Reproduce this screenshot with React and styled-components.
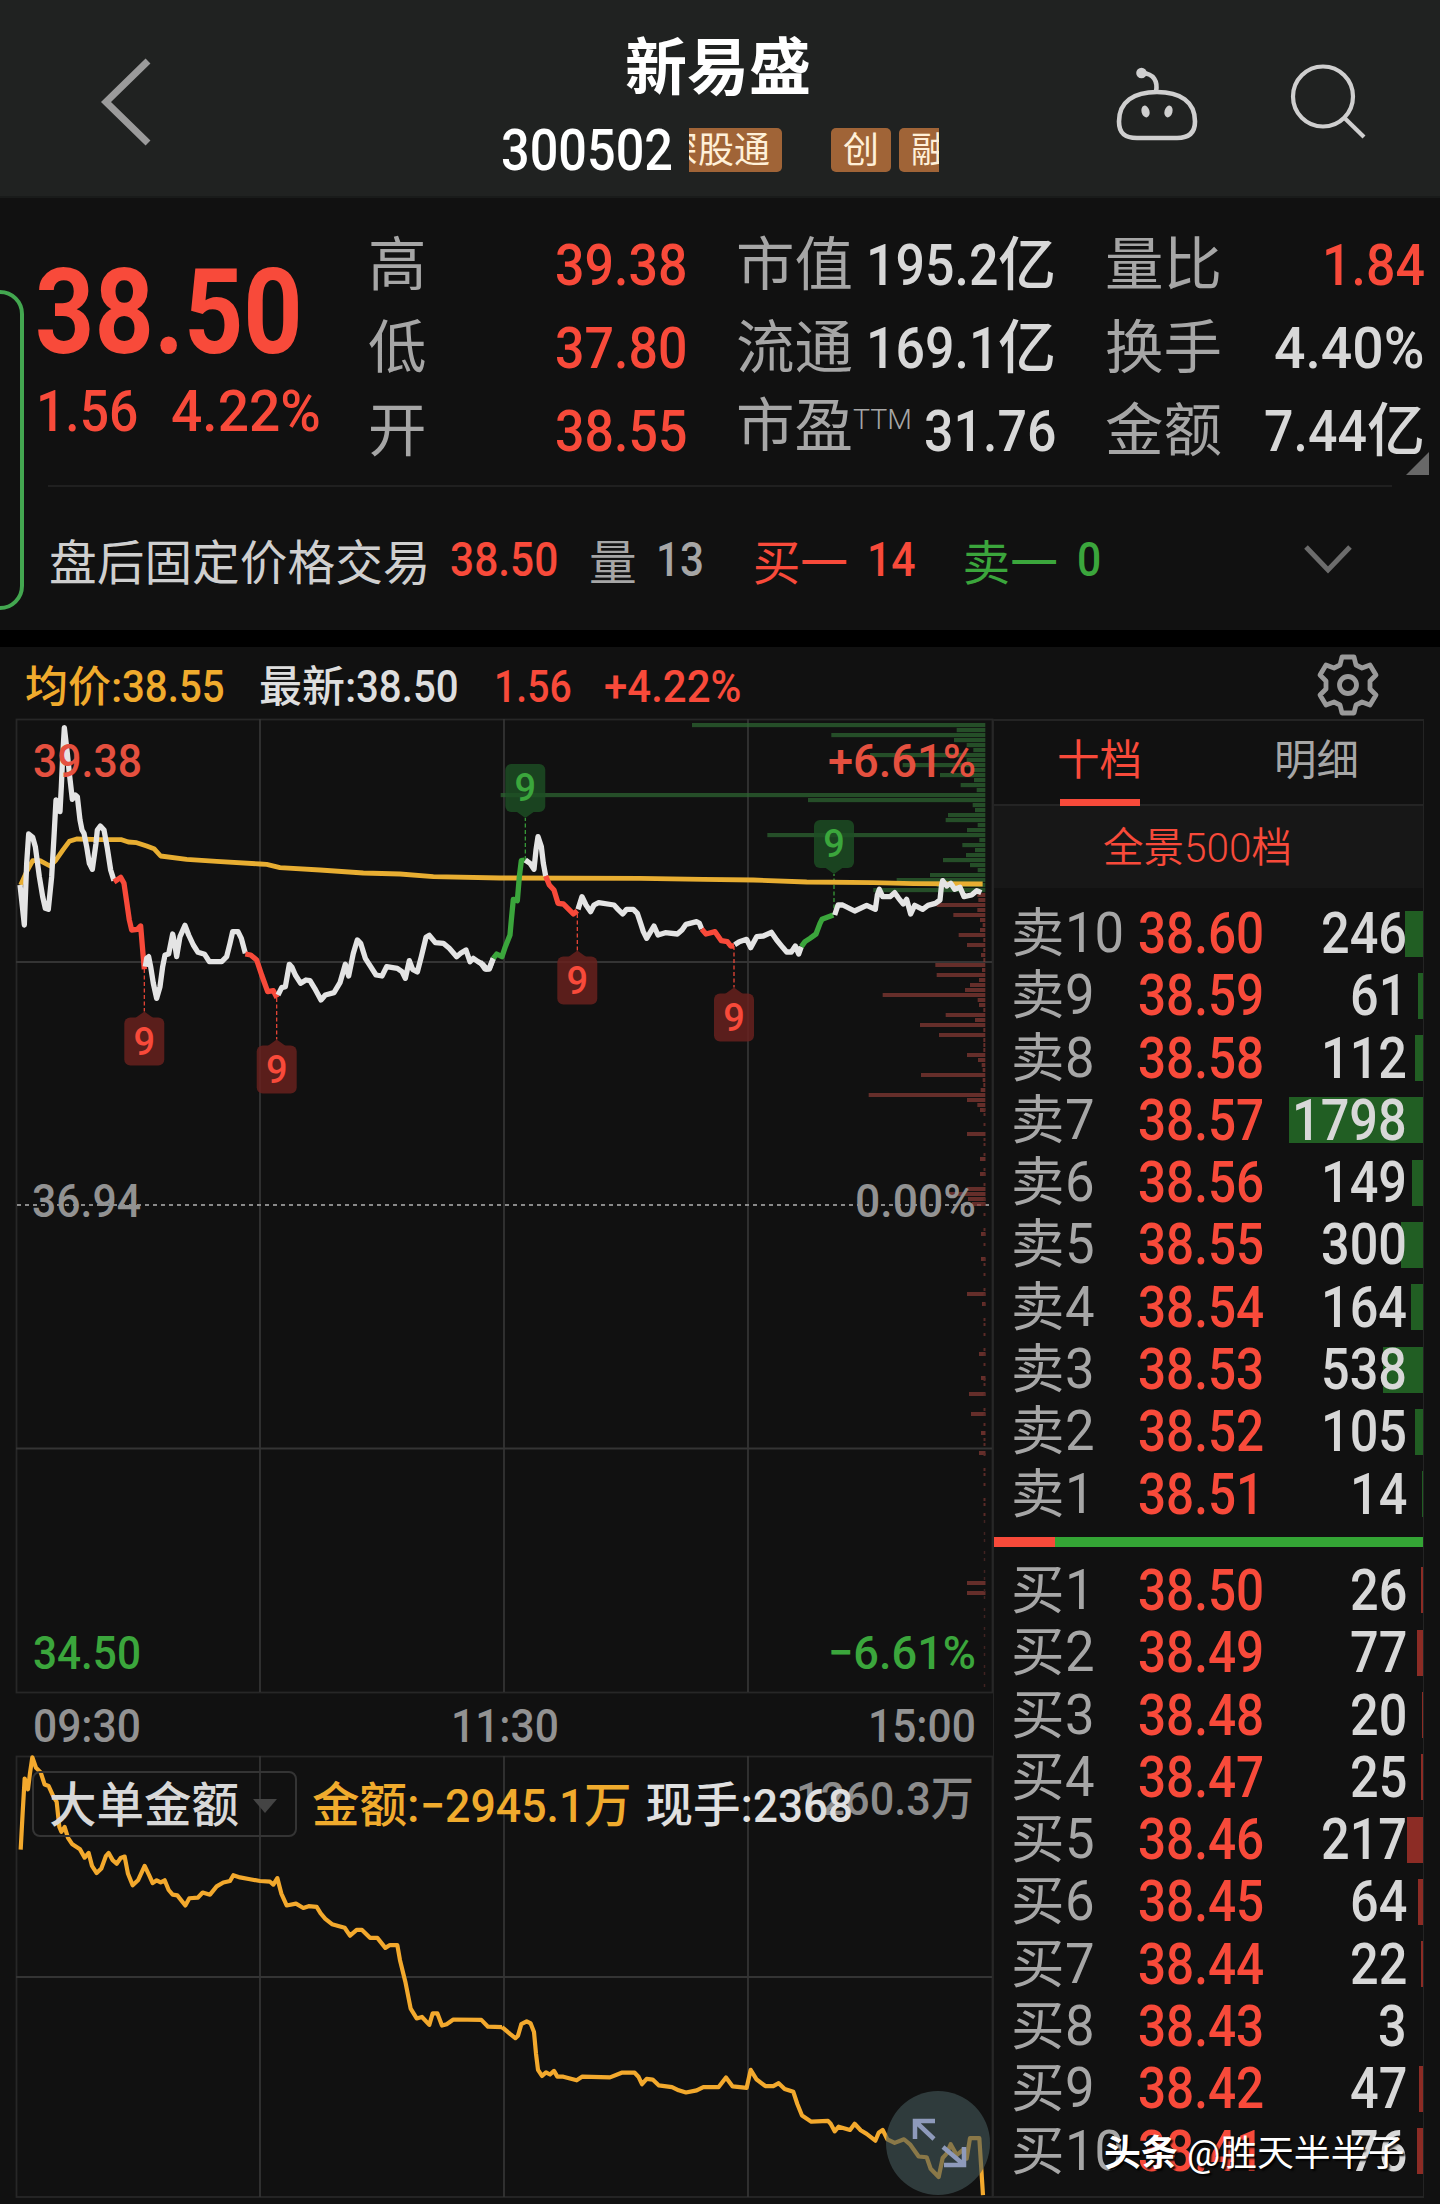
import styled, { createGlobalStyle } from "styled-components"

const RED = "#f84a3a"
const GREEN = "#3ba63c"
const LIGHT = "#d8d8d8"
const GRAY = "#a6a6a6"
const GOLD = "#f0ab2d"

const GlobalStyle = createGlobalStyle`
  * {
    box-sizing: border-box;
  }
  body {
    margin: 0;
    background-color: #111111;
    font-family: Roboto, "Noto Sans CJK SC", sans-serif;
  }
`

const Page = styled.div`
  width: 1440px;
  height: 2204px;
  overflow: hidden;
  position: relative;
  background-color: #111111;
  color: ${LIGHT};
`

// condensed figures: squeeze the glyphs and give the saved width back
const Figure = styled.span`
  display: inline-block;
  font-family: Roboto, sans-serif;
  font-size: ${(p) => p.$size}px;
  font-weight: ${(p) => p.$weight};
  color: ${(p) => p.$color || "inherit"};
  white-space: nowrap;
  transform: scaleX(${(p) => p.$k});
  transform-origin: left;
  margin-right: ${(p) => (p.$k - 1) * p.$chars}ch;
`
const CHAR_WIDTHS = { ".": 0.49, ":": 0.46, "%": 1.3, "−": 1 }

const Num = ({ size = 57, weight = 500, k = 0.9, color, children }) => {
  const text = String(children)
  const chars = [...text].reduce((sum, c) => sum + (CHAR_WIDTHS[c] || 1), 0)
  return <Figure $size={size} $weight={weight} $k={k} $color={color} $chars={chars}>{text}</Figure>
}

/* header */
const Header = styled.header`
  height: 198px;
  display: flex;
  align-items: flex-start;
  background-color: #202221;
  border-bottom: 2px solid #191b1a;
`
const BackIcon = styled.svg`
  width: 60px;
  height: 100px;
  margin: 52px 0 0 96px;
`
const Heading = styled.div`
  width: 438px;
  margin-left: 345px;
`
const Title = styled.h1`
  margin: 33px 0 0;
  padding-left: 124px;
  font-size: 62px;
  line-height: 72px;
  font-weight: 600;
  color: #ffffff;
`
const CodeLine = styled.div`
  height: 44px;
  margin-top: 23px;
  display: flex;
  align-items: center;
  justify-content: space-between;
  color: #ffffff;
`
const Tags = styled.div`
  flex: none;
  width: 250px;
  height: 44px;
  overflow: hidden;
  display: flex;
`
const Tag = styled.span`
  flex: none;
  height: 44px;
  padding: 0 12px;
  border-radius: 5px;
  margin-left: ${(p) => p.$gap || 0}px;
  font-size: 36px;
  line-height: 46px;
  color: #fff0d8;
  background-color: #a06437;
`
const RobotIcon = styled.svg`
  width: 90px;
  height: 84px;
  margin: 62px 0 0 172px;
`
const SearchIcon = styled.svg`
  width: 84px;
  height: 84px;
  margin: 60px 0 0 84px;
`

/* quote */
const Quote = styled.section`
  height: 432px;
  position: relative;
`
const SideTab = styled.div`
  position: absolute;
  left: -30px;
  top: 92px;
  width: 54px;
  height: 320px;
  border: 4px solid #43a750;
  border-radius: 24px;
`
const QuoteTop = styled.div`
  height: 289px;
  margin: 0 48px;
  display: flex;
  border-bottom: 2px solid #202020;
`
const Main = styled.div`
  flex: none;
  width: 333px;
  margin-left: -13px;
  padding-top: 56px;
  color: ${RED};
`
const Price = styled.div`
  height: 117px;
  line-height: 118px;
`
const Change = styled.div`
  height: 80px;
  line-height: 80px;
  padding-left: 1px;
  display: flex;
  gap: 33px;
`
const Stats = styled.div`
  display: grid;
  flex: none;
  grid-template-columns: 319px 320px 320px;
  grid-template-rows: repeat(3, 83px);
  column-gap: 49px;
  padding-top: 26px;
`
const Stat = styled.div`
  display: flex;
  justify-content: space-between;
  align-items: center;
  line-height: 83px;
  font-size: 58px;
  font-weight: 500;
  color: ${(p) => p.$color || LIGHT};
  white-space: nowrap;
`
const StatLabel = styled.span`
  color: ${GRAY};
  font-size: 58.5px;
  font-weight: 400;
`
const Sup = styled.span`
  font-size: 28.5px;
  font-weight: 300;
  position: relative;
  top: -17px;
`
const Corner = styled.svg`
  position: absolute;
  left: 1405px;
  top: 253px;
  width: 24px;
  height: 24px;
`
const AfterHours = styled.div`
  height: 143px;
  padding: 1px 87px 0 49px;
  display: flex;
  align-items: center;
  font-size: 47.7px;
  color: #cfcfcf;
`
const Field = styled.span`
  flex: none;
  display: flex;
  align-items: center;
  gap: 19px;
  margin-right: ${(p) => p.$after}px;
  color: ${(p) => p.$color || "inherit"};
`
const DownIcon = styled.svg`
  width: 50px;
  height: 32px;
  margin-left: auto;
`

/* info line */
const InfoLine = styled.div`
  height: 89px;
  border-top: 17px solid #000000;
  padding: 0 60px 0 25px;
  display: flex;
  align-items: flex-start;
  font-size: 43px;
  font-weight: 500;
`
const Info = styled.span`
  color: ${(p) => p.$color};
  line-height: 80px;
  margin-right: ${(p) => p.$after || 0}px;
  white-space: nowrap;
`
const GearIcon = styled.svg`
  width: 64px;
  height: 64px;
  margin: 6px 0 0 auto;
`

/* body */
const Body = styled.main`
  display: grid;
  grid-template-columns: 977px 431px;
  margin-left: 16px;
`
const Charts = styled.div`
  display: flex;
  flex-direction: column;
`
const ChartSvg = styled.svg`
  display: block;
  width: 977px;
  height: ${(p) => p.$h}px;
  overflow: visible;
`
const Times = styled.div`
  height: 63px;
  padding: 1px 17px 0;
  display: flex;
  align-items: center;
  justify-content: space-between;
  color: #929292;
`
const Lower = styled.div`
  position: relative;
`
const LowerHead = styled.div`
  position: absolute;
  left: 16px;
  top: 15px;
  height: 66px;
  display: flex;
  align-items: center;
  font-size: 47.5px;
  line-height: 62px;
  font-weight: 500;
  white-space: nowrap;
`
const LowerInfo = styled.span`
  color: ${(p) => p.$color};
  margin: 3px ${(p) => p.$after || 0}px 0 0;
`
const Picker = styled.div`
  width: 265px;
  height: 66px;
  padding: 3px 17px 0 15px;
  border: 2px solid #343434;
  border-radius: 8px;
  display: flex;
  align-items: center;
  justify-content: space-between;
  margin-right: 15px;
`
const Expand = styled.svg`
  position: absolute;
  left: 870px;
  top: 335px;
  width: 104px;
  height: 104px;
`

/* order book */
const Book = styled.aside`
  height: 1479px;
  border: solid #242424;
  border-width: 2px 1px;
`
const Tabs = styled.div`
  height: 85px;
  display: flex;
  justify-content: space-between;
  padding: 0 64px 0 63px;
  border-bottom: 2px solid #242424;
`
const Tab = styled.div`
  height: 85px;
  font-size: 42.5px;
  line-height: 80px;
  font-weight: 400;
  color: ${(p) => (p.$active ? RED : GRAY)};
  background: linear-gradient(${RED}, ${RED}) bottom / ${(p) => (p.$active ? "80px" : 0)} 7px no-repeat;
`
const Depth = styled.div`
  height: 82px;
  padding-left: 109px;
  font-size: 40.5px;
  line-height: 85px;
  font-weight: 350;
  color: ${RED};
  background-color: #171717;
`
const Side = styled.div`
  padding-top: ${(p) => p.$top}px;
`
const Row = styled.div`
  height: 62.3px;
  display: grid;
  grid-template-columns: 127px 130px 1fr;
  align-items: center;
  padding-left: 17px;
`
const RowLabel = styled.span`
  font-size: 53.5px;
  line-height: 62px;
  font-weight: 400;
  color: ${GRAY};
  white-space: nowrap;
`
const Volume = styled.div`
  height: 46px;
  padding-right: 16px;
  display: flex;
  justify-content: flex-end;
  align-items: center;
  background: linear-gradient(${(p) => p.$bar}, ${(p) => p.$bar}) right / ${(p) => p.$w}px 100% no-repeat;
`
const Ratio = styled.div`
  height: 10px;
  margin-top: 14px;
  background: linear-gradient(90deg, ${RED} 61px, #34a535 61px);
`
const Watermark = styled.div`
  position: absolute;
  left: 1104px;
  top: 2128px;
  font-size: 36.9px;
  line-height: 52px;
  color: #ffffff;
  text-shadow: 2px 2px 2px #000000;
  white-space: nowrap;
`

const stats = [
  ["高", "39.38", "", RED], ["市值", "195.2", "亿"], ["量比", "1.84", "", RED],
  ["低", "37.80", "", RED], ["流通", "169.1", "亿"], ["换手", "4.40%", ""],
  ["开", "38.55", "", RED], ["市盈", "31.76", ""], ["金额", "7.44", "亿"],
]
const sells = [246, 61, 112, 1798, 149, 300, 164, 538, 105, 14]
const buys = [26, 77, 20, 25, 217, 64, 22, 3, 47, 76]

// line data is in thirds of a pixel; the afternoon part starts at 1440
const morning = [
  ["#e4e4e4", "60,765 66,820 73,885 80,700 86,612 98,622 106,650 118,740 128,800 136,835 145,838 155,740 162,620 168,510 174,515 180,545 184,470 188,380 193,293 202,370 208,430 217,508 226,495 232,500 240,570 246,600 252,610 260,650 268,700 277,718 288,640 292,600 301,588 312,600 322,655 332,720 342,752"],
  [RED, "342,756 362,742 372,760 380,815 388,870 395,900 412,898 422,888 428,960 433,1018"],
  ["#e4e4e4", "436,1010 440,985 446,980 452,1010 460,1060 470,1105 480,1070 488,1010 495,975 506,972 518,912 524,940 530,980 540,920 555,886 566,915 580,945 594,967 614,973 628,995 665,995 680,980 690,940 698,905 714,905 724,925 736,970"],
  [RED, "736,972 752,975 770,990 785,1035 803,1085 820,1082 831,1103"],
  ["#e4e4e4", "834,1095 845,1073 856,1070 868,1003 876,1012 886,1035 902,1060 918,1050 930,1052 944,1075 963,1110 976,1095 1002,1088 1020,1058 1036,1003 1046,1038 1060,970 1072,930 1082,940 1096,985 1112,1010 1128,1035 1146,1038 1160,1010 1192,1015 1206,1025 1216,1045 1228,992 1238,1018 1252,1026 1264,980 1278,922 1288,916 1306,938 1330,940 1348,955 1370,980 1382,970 1398,960 1410,995 1420,985 1434,995 1448,1003 1460,1017 1468,1015 1480,985"],
]
const afternoon = [
  [GREEN, "40,985 50,972 66,980 76,950 90,915 94,870 100,808 112,812 118,740 124,692 134,690"],
  ["#e4e4e4", "136,690 150,700 162,718 168,660 174,620 184,650 190,700 197,738"],
  [RED, "197,738 208,765 222,780 234,820 250,822 268,840 280,852 292,842"],
  ["#e4e4e4", "294,838 306,800 318,825 332,845 342,825 356,818 402,825 414,838 428,852 440,838 460,838 472,850 482,880 490,905 500,925 512,905 522,888 534,915 556,908 592,912 606,900 618,883 650,875 658,880 665,897"],
  [RED, "665,897 678,912 705,905 724,932 742,935 752,948 762,948"],
  ["#e4e4e4", "764,944 778,935 800,928 812,953 830,920 850,918 874,907 890,930 908,952 920,966 934,966 946,948 956,972 964,950"],
  [GREEN, "964,950 975,935 990,925 1008,912 1020,880 1026,868 1060,855"],
  ["#e4e4e4", "1064,855 1074,825 1088,825 1124,843 1160,826 1186,838 1192,795 1198,778 1208,800 1230,800 1244,788 1256,805 1270,822 1280,808 1292,852 1304,826 1328,838 1344,826 1366,820 1380,810 1384,770 1388,752 1400,768 1412,760 1424,778 1440,772 1452,800 1475,795 1490,782 1504,788"],
]
const average = "62,765 80,725 98,692 120,692 150,708 168,690 190,658 208,634 230,627 300,629 365,629 385,636 410,638 440,648 462,656 482,678 560,688 650,694 780,702 800,703 840,713 960,720 1090,729 1200,732 1300,740 1500,744 1920,745 2110,748 2260,750 2420,756 2620,758 2740,761 2948,762"
const flowA = "62,583 68,480 74,385 84,415 90,370 97,326 108,355 122,368 134,402 146,406 160,435 170,450 178,520 184,533 194,520 204,550 216,567 240,582 254,605 266,592 276,628 290,648 304,635 318,600 326,592 338,612 350,622 362,606 374,602 384,650 398,682 414,668 434,628 448,655 458,676 470,668 482,674 494,668 506,695 518,708 532,710 556,738 568,718 594,716 608,702 630,708 650,685 670,674 690,670 700,654 720,660 750,665 780,670 810,672 820,680 832,662 844,705 860,738 888,733 910,745 926,740 950,742 962,760 976,775 996,790 1034,800 1050,822 1070,806 1086,806 1110,828 1132,828 1156,856 1170,848 1192,848 1200,890 1216,950 1232,1025 1250,1052 1266,1048 1288,1070 1298,1038 1312,1038 1326,1072 1340,1068 1360,1055 1444,1056 1464,1075 1506,1076"
const flowB = "66,1076 90,1095 106,1107 114,1100 124,1068 140,1060 152,1066 162,1090 168,1150 174,1195 186,1212 198,1202 210,1208 222,1198 232,1214 250,1214 290,1224 306,1214 390,1216 425,1203 464,1203 476,1215 486,1235 500,1220 518,1222 536,1238 576,1243 596,1252 618,1258 650,1252 670,1243 716,1243 738,1216 758,1241 800,1245 812,1195 830,1222 856,1240 880,1240 896,1232 914,1248 940,1256 952,1290 966,1322 994,1339 1044,1337 1052,1345 1064,1366 1076,1353 1110,1362 1124,1345 1142,1363 1160,1373 1186,1392 1196,1370 1208,1362 1222,1388 1244,1398 1272,1388 1290,1402 1316,1436 1340,1438 1352,1470 1376,1493 1388,1440 1400,1428 1412,1402 1430,1432 1448,1418 1460,1442 1470,1385 1498,1385 1509,1543"

// left end of every price level bar, one level each 5px
const greenBars = [636, 1430, 1054, 1422, 1460, 1480, 1170, 1460, 1268, 1480, 1380, 1482, 1442, 1490, 62, 984, 1478, 1485, 1404, 1397, 1493, 1461, 862, 1498, 1447, 1485, 1458, 1389, 1470, 1493, 1350, 1250, 1370, 1180]
const redBars = [1492, 1495, 1370, 1492, 1420, 1500, 1508, 1500, 1436, 1510, 1461, 1510, 1503, 1510, 1366, 1506, 1370, 1497, 1470, 1455, 1208, 1493, 1497, 1510, 1397, 1485, 1320, 1510, 1377, 1510, 1510, 1510, 1461, 1494, 1505, 1508, 1323, 1508, 1510, 1502, 1166, 1461, 1492, 1500]
const lowBars = [
  [1134, 967], [1159, 980], [1174, 980], [1189, 967], [1194, 946], [1199, 968], [1204, 972], [1234, 981],
  [1259, 981], [1294, 967], [1304, 982], [1354, 979], [1378, 981], [1394, 969], [1414, 971], [1433, 981],
  [1453, 979], [1583, 967], [1593, 967],
]

const signals = [
  { x: 144.3, from: 969, y: 1017.5, up: true },
  { x: 276.7, from: 998, y: 1045.5, up: true },
  { x: 577.3, from: 914, y: 956.5, up: true },
  { x: 734, from: 946, y: 993.5, up: true },
  { x: 525.3, from: 860, y: 764, up: false },
  { x: 834, from: 915, y: 820, up: false },
]

const Signal = ({ x, y, from, up }) => {
  const color = up ? RED : GREEN
  const tip = up
    ? `M${x - 9} ${y + 0.5}L${x} ${y - 6}L${x + 9} ${y + 0.5}Z`
    : `M${x - 9} ${y + 47.5}L${x} ${y + 54}L${x + 9} ${y + 47.5}Z`
  return (
    <g>
      <path d={`M${x} ${from}V${up ? y - 6 : y + 54}`} stroke={color} strokeWidth="1.2" strokeDasharray="4 2.5" />
      <g fill={up ? "#6a211e" : "#1d4f24"} opacity=".82">
        <rect x={x - 20} y={y} width="40" height="48" rx="6" />
        <path d={tip} />
      </g>
      <text x={x} y={up ? y + 37 : y + 36.5} textAnchor="middle" fontSize="38" fontWeight="500" fill={color}>9</text>
    </g>
  )
}

const Line = ({ points, color, width = 5.3 }) => (
  <polyline points={points} fill="none" stroke={color} strokeWidth={width} strokeLinejoin="round" strokeLinecap="butt" vectorEffect="non-scaling-stroke" />
)

const AxisText = ({ x, y, w, color, children }) => (
  <text x={x} y={y} fontSize="47" fontWeight="500" fill={color} textLength={w} lengthAdjust="spacingAndGlyphs">{children}</text>
)

const PriceChart = () => (
  <ChartSvg $h={974} viewBox="16 719 977 974">
    <g stroke="#343434" strokeWidth="1.8" fill="none">
      <rect x="16.5" y="719.5" width="976" height="973" stroke="#272727" />
      <path d="M260 719V1692M504 719V1692M748 719V1692M16 962H992M16 1448.5H992" />
    </g>
    <path d="M17 1205H992" stroke="#8a8a8a" strokeWidth="1.8" strokeDasharray="4 4" />
    <g transform="translate(480 630) scale(.33333)">
      {greenBars.map((x, i) => (
        <rect key={i} x={x} y={279 + i * 15} width={1516 - x} height="12.5" fill="#2c6330" fillOpacity=".75" />
      ))}
      {redBars.map((x, i) => (
        <rect key={i} x={x} y={789 + i * 15} width={1516 - x} height="12" fill="#863a34" fillOpacity=".72" />
      ))}
    </g>
    {lowBars.map(([y, x]) => (
      <rect key={y} x={x} y={y - 2} width={985.5 - x} height="4" fill="#863a34" fillOpacity=".72" />
    ))}
    <path d="M984.5 1108V1520" stroke="#5a2a27" strokeWidth="2" strokeDasharray="3 2 3 7 3 12" />
    <path d="M984.5 1520V1690" stroke="#402321" strokeWidth="1.5" strokeDasharray="3 9 3 4" />
    {signals.map((s) => <Signal key={s.x} {...s} />)}
    <g transform="translate(0 630) scale(.33333)">
      <Line points={average} color="#e8ae32" width={4.8} />
      {morning.map(([c, pts]) => <Line key={pts} points={pts} color={c} />)}
    </g>
    <g transform="translate(480 630) scale(.33333)">
      <Line points="0,995 15,1017 28,1017 40,985" color="#e4e4e4" />
      {afternoon.map(([c, pts]) => <Line key={pts} points={pts} color={c} />)}
    </g>
    <AxisText x={33} y={777} w={109} color="#e5503f">39.38</AxisText>
    <AxisText x={828} y={777} w={148} color="#e5503f">+6.61%</AxisText>
    <AxisText x={32} y={1217} w={109} color="#929292">36.94</AxisText>
    <AxisText x={855} y={1217} w={121} color="#929292">0.00%</AxisText>
    <AxisText x={33} y={1669} w={108} color={GREEN}>34.50</AxisText>
    <AxisText x={828} y={1669} w={148} color={GREEN}>−6.61%</AxisText>
  </ChartSvg>
)

const FlowChart = () => (
  <ChartSvg $h={442} viewBox="16 1756 977 442">
    <g stroke="#343434" strokeWidth="1.8" fill="none">
      <rect x="16.5" y="1756.5" width="976" height="440.5" stroke="#272727" />
      <path d="M260 1756V2197M504 1756V2197M748 1756V2197M16 1977H992" />
    </g>
    <g transform="translate(0 1640) scale(.33333 .3597)">
      <Line points={flowA} color="#f3a92d" width={4.2} />
    </g>
    <g transform="translate(480 1640) scale(.33333 .3597)">
      <Line points={flowB} color="#f3a92d" width={4.2} />
    </g>
    <AxisText x={796} y={1815} w={178} color="#8c8c8c">1260.3万</AxisText>
  </ChartSvg>
)

const BookRow = ({ label, index, price, volume, bar }) => (
  <Row>
    <RowLabel>{label}<Num size={56} weight={400} k={0.94}>{index}</Num></RowLabel>
    <Num color={RED} k={0.868}>{price}</Num>
    <Volume $bar={bar} $w={Math.round(volume * 0.0745)}><Num k={0.885}>{volume}</Num></Volume>
  </Row>
)

const App = () => {
  return (
    <Page>
      <GlobalStyle />
      <Header>
        <BackIcon viewBox="96 52 60 100">
          <path d="M148 61L106 102L148 143" fill="none" stroke="#9b9b9b" strokeWidth="7" />
        </BackIcon>
        <Heading>
          <Title>新易盛</Title>
          <CodeLine>
            <Num k={0.885}>300502</Num>
            <Tags>
              <Tag $gap={-39}>深股通</Tag>
              <Tag $gap={49}>创</Tag>
              <Tag $gap={8}>融</Tag>
            </Tags>
          </CodeLine>
        </Heading>
        <RobotIcon viewBox="1111 61.500 90 84" fill="none" stroke="#cfcfcf" strokeWidth="4.6">
          <path d="M1156 91C1158 81 1154 73 1142 72.5" />
          <circle cx="1141.500" cy="72.500" r="3" fill="#cfcfcf" />
          <path d="M1157 91.500C1180 91.500 1195 101 1195 121C1195 133 1188 137.500 1177 137.500H1137C1125 137.500 1119 133 1119 121C1119 101 1134 91.500 1157 91.500Z" />
          <g fill="#cfcfcf" stroke="none">
            <ellipse cx="1145.500" cy="111" rx="4" ry="6" transform="rotate(-15 1145.500 111)" />
            <ellipse cx="1168.500" cy="111" rx="4" ry="6" transform="rotate(15 1168.500 111)" />
          </g>
        </RobotIcon>
        <SearchIcon viewBox="1285 59.500 84 84" fill="none" stroke="#cfcfcf" strokeWidth="4.2">
          <circle cx="1323" cy="96" r="30" />
          <path d="M1344 117L1364 136.500" />
        </SearchIcon>
      </Header>

      <Quote>
        <SideTab />
        <QuoteTop>
          <Main>
            <Price><Num size={118} weight={700} k={0.878}>38.50</Num></Price>
            <Change>
              <Num size={58} k={0.89}>1.56</Num>
              <Num size={58} k={0.95}>4.22%</Num>
            </Change>
          </Main>
          <Stats>
            {stats.map(([label, value, unit, color]) => (
              <Stat key={label} $color={color}>
                <StatLabel>{label}{label === "市盈" && <Sup>TTM</Sup>}</StatLabel>
                <span><Num size={58} k={value.includes("%") ? 0.955 : 0.895}>{value}</Num>{unit}</span>
              </Stat>
            ))}
          </Stats>
        </QuoteTop>
        <Corner viewBox="0 0 24 24"><path d="M1 24L24 1V24Z" fill="#686868" /></Corner>
        <AfterHours>
          <Field $after={31}>盘后固定价格交易<Num size={48} k={0.885} color={RED}>38.50</Num></Field>
          <Field $after={49} $color={GRAY}>量<Num size={48} k={0.88}>13</Num></Field>
          <Field $after={47} $color={RED}>买一<Num size={48} k={0.89}>14</Num></Field>
          <Field $after={0} $color={GREEN}>卖一<Num size={48} k={0.89}>0</Num></Field>
          <DownIcon viewBox="0 0 50 32"><path d="M3 4L25 27L47 4" fill="none" stroke="#6c6c6c" strokeWidth="5" /></DownIcon>
        </AfterHours>
      </Quote>

      <InfoLine>
        <Info $color={GOLD} $after={34}>均价:<Num size={43.5} k={0.925}>38.55</Num></Info>
        <Info $color="#dedede" $after={35}>最新:<Num size={43.5} k={0.925}>38.50</Num></Info>
        <Info $color={RED} $after={32}><Num size={43.5} k={0.9}>1.56</Num></Info>
        <Info $color={RED}><Num size={43.5} k={0.965}>+4.22%</Num></Info>
        <GearIcon viewBox="-32 -32 64 64" fill="none" stroke="#9a9a9a" strokeWidth="4.8" strokeLinejoin="round">
          <path d="M-6 -28H6L8 -20L14 -17L22 -20L28 -10L22 -4V4L28 10L22 20L14 17L8 20L6 28H-6L-8 20L-14 17L-22 20L-28 10L-22 4V-4L-28 -10L-22 -20L-14 -17L-8 -20Z" />
          <circle r="8.5" />
        </GearIcon>
      </InfoLine>

      <Body>
        <Charts>
          <PriceChart />
          <Times>
            <Num size={47} k={0.905}>09:30</Num>
            <Num size={47} k={0.905}>11:30</Num>
            <Num size={47} k={0.905}>15:00</Num>
          </Times>
          <Lower>
            <FlowChart />
            <LowerHead>
              <Picker>
                大单金额
                <svg width="26" height="16" viewBox="0 0 26 16"><path d="M1 1H25L13 15Z" fill="#444444" /></svg>
              </Picker>
              <LowerInfo $color={GOLD} $after={14}>金额:<Num size={47} k={0.95}>−2945.1</Num>万</LowerInfo>
              <LowerInfo $color="#e0e0e0">现手:<Num size={47} k={0.935}>2368</Num></LowerInfo>
            </LowerHead>
            <Expand viewBox="0 0 104 104">
              <circle cx="52" cy="52" r="52" fill="#44595a" fillOpacity=".6" />
              <path d="M29 48V30H49M30 31L48 48M78 56V74H58M77 73L57 56" fill="none" stroke="#8e9abb" strokeWidth="4.5" />
            </Expand>
          </Lower>
        </Charts>
        <Book>
          <Tabs>
            <Tab $active>十档</Tab>
            <Tab>明细</Tab>
          </Tabs>
          <Depth>全景500档</Depth>
          <Side $top={12}>
            {sells.map((v, i) => (
              <BookRow key={i} label="卖" index={10 - i} price={(38.6 - i / 100).toFixed(2)} volume={v} bar="#215e23" />
            ))}
          </Side>
          <Ratio />
          <Side $top={10}>
            {buys.map((v, i) => (
              <BookRow key={i} label="买" index={i + 1} price={(38.5 - i / 100).toFixed(2)} volume={v} bar="#8c2c25" />
            ))}
          </Side>
        </Book>
      </Body>
      <Watermark><b>头条</b> @胜天半半子</Watermark>
    </Page>
  )
}

export default App
